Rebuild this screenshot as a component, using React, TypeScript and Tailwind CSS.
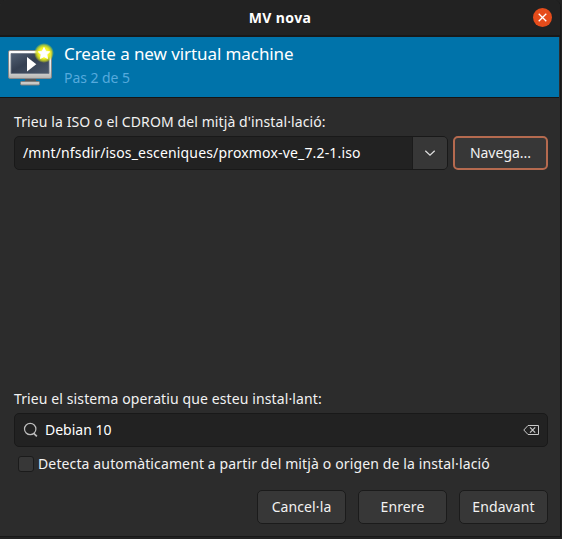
import React from "react";

function MonitorIcon() {
  return (
    <svg width="48" height="48" viewBox="0 0 48 48" className="shrink-0">
      <defs>
        <linearGradient id="frame" x1="0" y1="0" x2="0" y2="1">
          <stop offset="0" stopColor="#ffffff" />
          <stop offset="0.7" stopColor="#dededc" />
          <stop offset="1" stopColor="#b4b4b2" />
        </linearGradient>
        <linearGradient id="screen" x1="0" y1="0" x2="1" y2="1">
          <stop offset="0" stopColor="#536174" />
          <stop offset="0.45" stopColor="#354052" />
          <stop offset="1" stopColor="#4b586b" />
        </linearGradient>
        <radialGradient id="glow">
          <stop offset="0" stopColor="#ffff80" />
          <stop offset="0.55" stopColor="#f2f21c" />
          <stop offset="0.78" stopColor="#d4dc20" stopOpacity="0.75" />
          <stop offset="1" stopColor="#c8d818" stopOpacity="0" />
        </radialGradient>
      </defs>
      <path d="M19 35h11v4H19z" fill="#55575a" />
      <rect x="14.5" y="38.5" width="19" height="3.5" rx="1" fill="#c9c9c7" stroke="#7b7d7b" />
      <rect x="2.5" y="7.5" width="43" height="28" rx="1.5" fill="url(#frame)" stroke="#83878a" />
      <path d="M5 10.5h38v20H5z" fill="url(#screen)" stroke="#6d7785" strokeWidth="0.8" />
      <path d="M21 14v14.5l9.3-7.2z" fill="#fff" />
      <circle cx="38" cy="10" r="10" fill="url(#glow)" />
      <path d="M38 4.5l1.8 3.7 4 .6-2.9 2.8.7 4-3.6-1.9-3.6 1.9.7-4-2.9-2.8 4-.6z" fill="#fff" stroke="#fff" strokeWidth="0.8" strokeLinejoin="round" />
    </svg>
  );
}

function ActionButton({ children }: { children: React.ReactNode }) {
  return (
    <button className="flex h-[34px] w-[89px] items-center justify-center rounded-[5px] border border-[#1b1b1b] bg-[#373737] tracking-[0.1px]">
      {children}
    </button>
  );
}

export default function App() {
  return (
    <div className="h-[539px] w-[562px] overflow-hidden bg-[#222222] font-['Noto_Sans',sans-serif] text-[14px] leading-[20px] whitespace-nowrap text-[#f2f2f2]">
      <div className="flex h-[537px] w-[561px] flex-col rounded-t-[7px] border-r border-b border-[#181818] bg-[#2c2c2c]">
        <header className="flex h-[37px] shrink-0 items-center justify-between rounded-t-[7px] border-b-2 border-[#191919] bg-[#222222] pr-[8px]">
          <span className="w-[19px]" />
          <h1 className="ml-[8px] text-[14px] font-bold tracking-[0.4px] text-white">MV nova</h1>
          <button className="flex size-[19px] items-center justify-center rounded-full bg-[#e54c1b]">
            <svg width="9" height="9" viewBox="0 0 9 9" stroke="#fff" strokeWidth="1.3">
              <path d="M.7.7l7.6 7.6M8.3.7L.7 8.3" />
            </svg>
          </button>
        </header>
        <section className="flex h-[61px] w-[559px] shrink-0 border-b border-[#151515] bg-[#0073aa] pt-[6px] pl-[6px]">
          <MonitorIcon />
          <div className="ml-[10px]">
            <h2 className="text-[17px] leading-[22px] tracking-[-0.08px] text-white">Create a new virtual machine</h2>
            <p className="mt-[3px] tracking-[-0.05px] text-[#55aadd]">Pas 2 de 5</p>
          </div>
        </section>
        <main className="flex min-h-0 flex-1 flex-col pt-[14px] pr-[12px] pb-[12px] pl-[14px]">
          <label className="h-[24px] tracking-[0.1px]">Trieu la ISO o el CDROM del mitjà d'instal·lació:</label>
          <div className="flex h-[34px] gap-[5px]">
            <div className="flex w-[434px] overflow-hidden rounded-[5px] border border-[#191919] bg-[#222222]">
              <div className="flex w-[397px] items-center pl-[8px] tracking-[0.165px] text-white">/mnt/nfsdir/isos_esceniques/proxmox-ve_7.2-1.iso</div>
              <div className="flex flex-1 items-center justify-center border-l border-[#1b1b1b] bg-[#373737]">
                <svg width="12" height="8" viewBox="0 0 12 8" fill="none" stroke="#ddd" strokeWidth="1.3"><path d="M1.3 1.8L6 6.2l4.7-4.4" /></svg>
              </div>
            </div>
            <button className="flex w-[95px] items-center justify-center rounded-[5px] border-2 border-[#b56a4f] bg-[#373737]">Navega...</button>
          </div>
          <label className="mt-auto h-[24px] tracking-[0.11px]">Trieu el sistema operatiu que esteu instal·lant:</label>
          <div className="flex h-[34px] w-[534px] shrink-0 items-center rounded-[5px] border border-[#191919] bg-[#222222] px-[8px]">
            <svg width="16" height="16" viewBox="0 0 16 16" fill="none" stroke="#bdbdbd" strokeWidth="1.2"><circle cx="7.2" cy="7" r="5.7" /><path d="M10.7 11.3l3.2 3" strokeWidth="1.7" /></svg>
            <span className="ml-[6px] text-white">Debian 10</span>
            <svg className="ml-auto" width="16" height="10" viewBox="0 0 16 10" fill="none" stroke="#c9c9c9"><path d="M5 .5h10.5v9H5L.8 5z" /><path d="M7 2.3l5.2 5.4M12.2 2.3L7 7.7" strokeWidth="1.2" /></svg>
          </div>
          <div className="mt-[7px] flex h-[20px] shrink-0 items-center pl-[4px]">
            <span className="size-[16px] rounded-[3px] border border-[#1b1b1b] bg-[#373737]" />
            <span className="ml-[4px] tracking-[0.13px]">Detecta automàticament a partir del mitjà o origen de la instal·lació</span>
          </div>
          <footer className="mt-[16px] flex shrink-0 justify-end gap-[12px]">
            <ActionButton>Cancel·la</ActionButton>
            <ActionButton>Enrere</ActionButton>
            <ActionButton>Endavant</ActionButton>
          </footer>
        </main>
      </div>
    </div>
  );
}
